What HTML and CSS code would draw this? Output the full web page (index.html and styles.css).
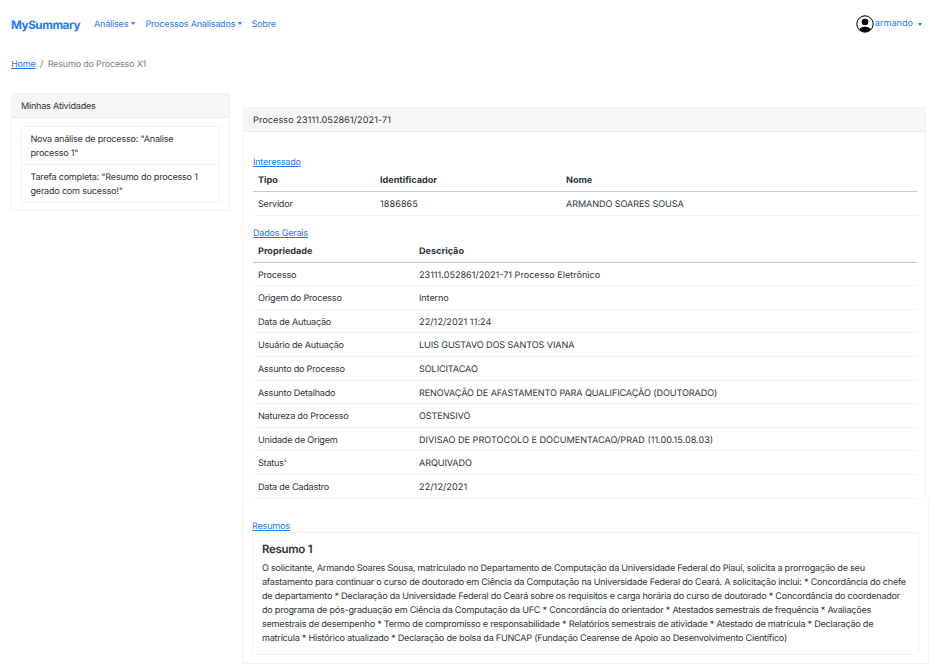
FILE: index.html
```html
<!DOCTYPE html>
<html lang="pt-BR">
<head>
<meta charset="utf-8">
<title>MySummary</title>
<link rel="stylesheet" href="styles.css">
</head>
<body>
<nav class="navbar">
  <a class="brand">MySummary</a>
  <a class="nav-link analyses">Análises<i class="caret"></i></a>
  <a class="nav-link processes">Processos Analisados<i class="caret"></i></a>
  <a class="nav-link">Sobre</a>
  <a class="user">
    <svg class="avatar" viewBox="0 0 18 18"><defs><clipPath id="face"><circle cx="9" cy="9" r="8"/></clipPath></defs><circle cx="9" cy="9" r="8.2" fill="#fff" stroke="#000" stroke-width="1"/><g clip-path="url(#face)"><circle cx="9" cy="7" r="3.3"/><ellipse cx="9" cy="16.2" rx="6.6" ry="4.5"/></g></svg>
    <span>armando</span><i class="caret"></i>
  </a>
</nav>
<div class="breadcrumb"><a class="link">Home</a><span class="slash">/</span><span>Resumo do Processo X1</span></div>
<div class="layout">
  <aside class="card sidebar">
    <div class="card-header">Minhas Atividades</div>
    <ul class="activities">
      <li>Nova análise de processo: "Analise<br>processo 1"</li>
      <li>Tarefa completa: "Resumo do processo 1<br>gerado com sucesso!"</li>
    </ul>
  </aside>
  <main class="content">
    <section class="card process">
      <div class="card-header number">Processo 23111.052861/2021-71</div>
      <div class="process-body">
        <a class="link section-link">Interessado</a>
        <table class="table people">
          <thead><tr><th class="c-type">Tipo</th><th class="c-id">Identificador</th><th>Nome</th></tr></thead>
          <tbody><tr><td>Servidor</td><td class="number">1886865</td><td class="value">ARMANDO SOARES SOUSA</td></tr></tbody>
        </table>
        <a class="link section-link">Dados Gerais</a>
        <table class="table general">
          <thead><tr><th class="c-prop">Propriedade</th><th>Descrição</th></tr></thead>
          <tbody>
            <tr><td>Processo</td><td class="code">23111.052861/2021-71 Processo Eletrônico</td></tr>
            <tr><td>Origem do Processo</td><td class="value">Interno</td></tr>
            <tr><td>Data de Autuação</td><td class="number">22/12/2021 11:24</td></tr>
            <tr><td>Usuário de Autuação</td><td class="value">LUIS GUSTAVO DOS SANTOS VIANA</td></tr>
            <tr><td>Assunto do Processo</td><td class="value">SOLICITACAO</td></tr>
            <tr><td>Assunto Detalhado</td><td class="value">RENOVAÇÃO DE AFASTAMENTO PARA QUALIFICAÇÃO (DOUTORADO)</td></tr>
            <tr><td>Natureza do Processo</td><td class="value">OSTENSIVO</td></tr>
            <tr><td>Unidade de Origem</td><td class="code">DIVISAO DE PROTOCOLO E DOCUMENTACAO/PRAD (11.00.15.08.03)</td></tr>
            <tr><td>Status'</td><td class="value">ARQUIVADO</td></tr>
            <tr><td>Data de Cadastro</td><td class="number">22/12/2021</td></tr>
          </tbody>
        </table>
      </div>
    </section>
    <section class="summaries">
      <a class="link section-link">Resumos</a>
      <article class="card summary">
        <h5>Resumo 1</h5>
        <p>O solicitante, Armando Soares Sousa, matriculado no Departamento de Computação da Universidade Federal do Piauí, solicita a prorrogação de seu<br>afastamento para continuar o curso de doutorado em Ciência da Computação na Universidade Federal do Ceará. A solicitação inclui: * Concordância do chefe<br>de departamento * Declaração da Universidade Federal do Ceará sobre os requisitos e carga horária do curso de doutorado * Concordância do coordenador<br>do programa de pós-graduação em Ciência da Computação da UFC * Concordância do orientador * Atestados semestrais de frequência * Avaliações<br>semestrais de desempenho * Termo de compromisso e responsabilidade * Relatórios semestrais de atividade * Atestado de matrícula * Declaração de<br>matrícula * Histórico atualizado * Declaração de bolsa da FUNCAP (Fundação Cearense de Apoio ao Desenvolvimento Científico)</p>
      </article>
    </section>
  </main>
</div>
</body>
</html>
```
FILE: styles.css
```css
* { box-sizing: border-box; }
body {
  margin: 0;
  background: #fff;
  color: #303438;
  font: 9.1px/14px Inter, "Liberation Sans", sans-serif;
  letter-spacing: -0.23px;
  text-rendering: geometricPrecision;
  white-space: nowrap;
}
.navbar {
  display: flex;
  align-items: center;
  height: 49px;
  padding: 0 13px 0 11px;
  color: #2379fb;
}
.brand { width: 83px; font-size: 11.7px; font-weight: 700; letter-spacing: -0.45px; }
.nav-link { padding-top: 1px; }
.analyses { width: 51.5px; }
.processes { width: 106px; }
.caret {
  display: inline-block;
  margin-left: 3px;
  vertical-align: 2px;
  border: 2.8px solid transparent;
  border-width: 3px 2.8px 0;
  border-top-color: currentColor;
}
.user { display: flex; align-items: center; height: 47px; margin: -1px 0 0 auto; letter-spacing: 0; }
.user .caret { margin-left: 5px; }
.avatar { width: 18px; height: 18px; margin-right: 1px; }
.breadcrumb { height: 44px; padding: 9px 11px 0; color: #7b8085; }
.link { color: #2379fb; text-decoration: underline; }
.slash { margin: 0 4.5px; }
.layout { display: flex; align-items: flex-start; padding-left: 11px; }
.card { border: 1px solid #f3f3f3; border-radius: 2px; background: #fff; }
.card-header {
  height: 24px;
  padding: 6px 9px 0;
  background: #f6f6f6;
  border-bottom: 1px solid #ebebeb;
}
.sidebar { width: 219px; height: 118px; }
.activities {
  margin: 8px 9px;
  padding: 0;
  list-style: none;
  border: 1px solid #f3f3f3;
  border-radius: 2px;
}
.activities li { height: 37px; padding: 6px 8.5px 0; }
.activities li + li { height: 38px; border-top: 1px solid #f3f3f3; }
.content { padding: 14px 0 0 12px; }
.process {
  width: 683px;
  height: 392px;
  margin-left: 1px;
  border-bottom: 0;
  border-radius: 2px 2px 0 0;
}
.process-body { padding: 23px 9px 0; }
.section-link { display: block; width: max-content; height: 14px; line-height: 16px; }
.table {
  width: 664px;
  border-collapse: separate;
  border-spacing: 0;
  table-layout: fixed;
}
.table th, .table td { height: 23.6px; padding: 2.5px 5px 0; text-align: left; border-bottom: 1px solid #f3f3f3; }
.table td { padding-top: 3.5px; }
.table th { height: 23px; font-weight: 700; letter-spacing: 0; border-bottom: 1.5px solid #c8c8c8; }
.table .value { letter-spacing: -0.1px; }
.table .code { letter-spacing: 0; }
.number, .table .number { letter-spacing: 0.08px; }
.people { margin-bottom: 10px; }
.c-type { width: 122px; }
.c-id { width: 186px; }
.c-prop { width: 161px; }
.summaries {
  width: 687px;
  height: 165px;
  padding: 20px 9px 0;
  border: 1px solid #f3f3f3;
  border-top: 0;
  border-radius: 2px;
}
.summary { height: 123px; margin-top: -1px; padding: 9px; }
.summary h5 { margin: 0 0 5px; font-size: 11.5px; line-height: 15px; font-weight: 600; letter-spacing: -0.3px; }
.summary p { margin: 0; letter-spacing: -0.242px; }
```
